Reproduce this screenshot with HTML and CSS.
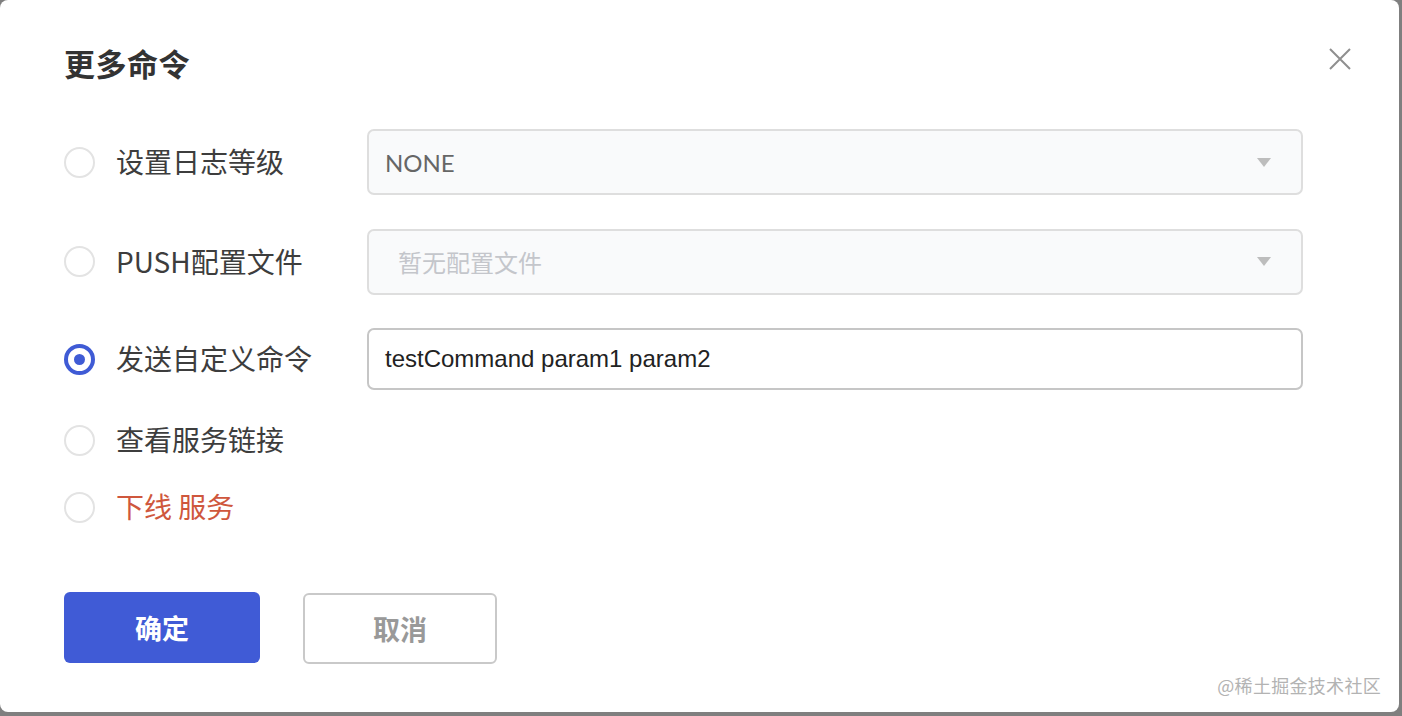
FILE: index.html
```html
<!DOCTYPE html>
<html lang="zh">
<head>
<meta charset="utf-8">
<title>更多命令</title>
<link rel="stylesheet" href="styles.css">
</head>
<body>
<div class="dialog">
  <div class="header">
    <h1 class="title">更多命令</h1>
    <button class="close" aria-label="关闭">
      <svg width="22" height="22" viewBox="0 0 22 22"><path d="M1 1L21 21M21 1L1 21" stroke="#8f8f8f" stroke-width="2" fill="none"/></svg>
    </button>
  </div>
  <div class="form">
    <div class="row row-select">
      <label class="option"><span class="radio"></span><span class="label">设置日志等级</span></label>
      <div class="select"><span class="value">NONE</span><span class="arrow"></span></div>
    </div>
    <div class="row row-select2">
      <label class="option"><span class="radio"></span><span class="label">PUSH配置文件</span></label>
      <div class="select"><span class="placeholder">暂无配置文件</span><span class="arrow"></span></div>
    </div>
    <div class="row row-input">
      <label class="option"><span class="radio checked"></span><span class="label">发送自定义命令</span></label>
      <div class="input">testCommand param1 param2</div>
    </div>
    <div class="row row-text">
      <label class="option"><span class="radio"></span><span class="label">查看服务链接</span></label>
    </div>
    <div class="row row-text">
      <label class="option"><span class="radio"></span><span class="label danger">下线 服务</span></label>
    </div>
  </div>
  <div class="actions">
    <button class="btn btn-primary">确定</button>
    <button class="btn btn-default">取消</button>
  </div>
  <div class="watermark">@稀土掘金技术社区</div>
</div>
</body>
</html>
```
FILE: styles.css
```css
html, body {
  margin: 0;
  padding: 0;
  background: #7f7f7f;
  overflow: hidden;
  font-family: "Noto Sans CJK SC", "Lato", sans-serif;
}
.dialog {
  position: relative;
  width: 1399px;
  height: 712px;
  background: #fff;
  border-radius: 8px;
  box-sizing: border-box;
  padding: 44px 0 0 64px;
}
.header {
  display: flex;
  justify-content: space-between;
  align-items: flex-start;
  padding-right: 48px;
}
.title {
  margin: 0;
  font-size: 31px;
  line-height: 38px;
  font-weight: 700;
  color: #333;
  letter-spacing: 0.5px;
}
.close {
  border: 0;
  background: none;
  padding: 0;
  margin-top: 4px;
  width: 22px;
  height: 22px;
  display: block;
}
.close svg { display: block; }
.form {
  margin-top: 47px;
  display: flex;
  flex-direction: column;
  gap: 33px;
}
.row {
  display: flex;
  align-items: center;
}
.row-select { height: 66px; }
.row-select2 { height: 67px; }
.row-input { height: 62px; }
.row-text { height: 34px; }
.option {
  width: 303px;
  display: flex;
  align-items: center;
  gap: 21px;
}
.radio {
  width: 31px;
  height: 31px;
  box-sizing: border-box;
  border: 2px solid #e3e3e3;
  border-radius: 50%;
  flex: none;
  background: #fff;
  display: flex;
  align-items: center;
  justify-content: center;
}
.radio.checked {
  border: 4px solid #3f5bd5;
}
.radio.checked::after {
  content: "";
  width: 11px;
  height: 11px;
  border-radius: 50%;
  background: #3f5bd5;
}
.label {
  font-size: 28px;
  line-height: 34px;
  color: #3d3d3d;
  margin-top: -2px;
}
.label.danger { color: #cf573d; }
.select {
  width: 936px;
  height: 66px;
  box-sizing: border-box;
  border: 2px solid #dedede;
  border-radius: 7px;
  background: #f9fafb;
  display: flex;
  align-items: center;
  justify-content: space-between;
  padding: 0 30px 0 16px;
}
.value {
  font-family: "Lato", sans-serif;
  font-size: 24px;
  color: #666;
}
.placeholder {
  font-size: 24px;
  color: #c4c6cb;
  padding-left: 13px;
}
.arrow {
  width: 0;
  height: 0;
  border-left: 7px solid transparent;
  border-right: 7px solid transparent;
  border-top: 9px solid #bdbdbd;
}
.input {
  width: 936px;
  height: 62px;
  box-sizing: border-box;
  border: 2px solid #c6c6c6;
  border-radius: 7px;
  background: #fff;
  display: flex;
  align-items: center;
  padding-left: 16px;
  font-family: "Liberation Sans", Arial, sans-serif;
  font-size: 24px;
  color: #222;
}
.actions {
  margin-top: 68px;
  display: flex;
  gap: 43px;
  align-items: flex-start;
}
.btn {
  font-family: "Noto Sans CJK SC", sans-serif;
  font-size: 27px;
  font-weight: 700;
  border-radius: 6px;
  box-sizing: border-box;
  padding: 0;
  cursor: pointer;
}
.btn-primary {
  width: 196px;
  height: 71px;
  background: #405bd6;
  border: 0;
  color: #fff;
}
.btn-default {
  width: 194px;
  height: 71px;
  background: #fff;
  border: 2px solid #c9c9c9;
  color: #999;
  margin-top: 1px;
}
.watermark {
  position: absolute;
  right: 18px;
  bottom: 16px;
  font-size: 18px;
  line-height: 22px;
  color: #b3b3b3;
  letter-spacing: 0.3px;
}
```
